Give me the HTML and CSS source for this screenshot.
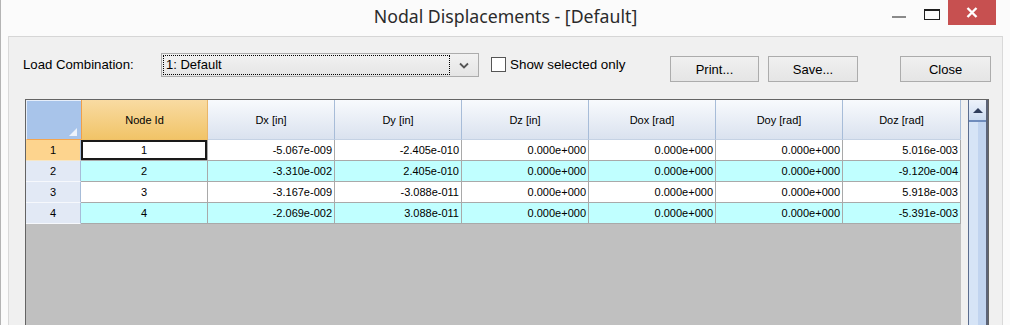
FILE: index.html
```html
<!DOCTYPE html>
<html>
<head>
  <title>Nodal Displacements - [Default]</title>
  <link rel="stylesheet" href="styles.css">
</head>
<body>
  <div class="window">
    <div class="titlebar">
      <div></div>
      <div class="title">Nodal Displacements - [Default]</div>
      <div class="controls">
        <span class="ctl ctl-min"><i></i></span>
        <span class="ctl ctl-max"><i></i></span>
        <span class="ctl ctl-close">
          <svg width="12" height="11" viewBox="0 0 12 11"><path d="M1.5 1 L10.5 10 M10.5 1 L1.5 10" stroke="#fff" stroke-width="2.4"/></svg>
        </span>
      </div>
    </div>

    <div class="client">
      <div class="toolbar">
        <label class="combo-label">Load Combination:</label>
        <div class="combo">
          <div class="combo-value">1: Default</div>
          <svg class="combo-arrow" width="10" height="7" viewBox="0 0 10 7"><path d="M1 1.5 L5 5.5 L9 1.5" fill="none" stroke="#555" stroke-width="1.8"/></svg>
        </div>
        <div class="check">
          <span class="check-box"></span>
          <span>Show selected only</span>
        </div>
        <button class="btn btn-print">Print...</button>
        <button class="btn btn-save">Save...</button>
        <button class="btn btn-close">Close</button>
      </div>

      <div class="grid-frame">
        <div class="grid-area">
          <div class="grid">
            <div class="hd corner"><span class="corner-tri"></span></div>
            <div class="hd hd-sel">Node Id</div>
            <div class="hd">Dx [in]</div>
            <div class="hd">Dy [in]</div>
            <div class="hd">Dz [in]</div>
            <div class="hd">Dox [rad]</div>
            <div class="hd">Doy [rad]</div>
            <div class="hd">Doz [rad]</div>

            <div class="rh rh-sel">1</div>
            <div class="c id current">1</div>
            <div class="c">-5.067e-009</div>
            <div class="c">-2.405e-010</div>
            <div class="c">0.000e+000</div>
            <div class="c">0.000e+000</div>
            <div class="c">0.000e+000</div>
            <div class="c">5.016e-003</div>

            <div class="rh">2</div>
            <div class="c id alt">2</div>
            <div class="c alt">-3.310e-002</div>
            <div class="c alt">2.405e-010</div>
            <div class="c alt">0.000e+000</div>
            <div class="c alt">0.000e+000</div>
            <div class="c alt">0.000e+000</div>
            <div class="c alt">-9.120e-004</div>

            <div class="rh">3</div>
            <div class="c id">3</div>
            <div class="c">-3.167e-009</div>
            <div class="c">-3.088e-011</div>
            <div class="c">0.000e+000</div>
            <div class="c">0.000e+000</div>
            <div class="c">0.000e+000</div>
            <div class="c">5.918e-003</div>

            <div class="rh">4</div>
            <div class="c id alt">4</div>
            <div class="c alt">-2.069e-002</div>
            <div class="c alt">3.088e-011</div>
            <div class="c alt">0.000e+000</div>
            <div class="c alt">0.000e+000</div>
            <div class="c alt">0.000e+000</div>
            <div class="c alt">-5.391e-003</div>
          </div>
        </div>
        <div class="vscroll">
          <div class="vs-up"><span class="vs-tri"></span></div>
          <div class="vs-thumb"></div>
        </div>
      </div>
    </div>
  </div>
</body>
</html>
```

FILE: styles.css
```css
:root {
  --frame-bg: #fbfbfb;
  --client-bg: #f0f0f0;
  --ctl-border: #acacac;
  --text: #000;
  --cell-line: #a9a9a9;
  --hd-line: #a7bcd8;
  --alt-row: #c0ffff;
}

html, body {
  margin: 0;
  padding: 0;
  width: 1010px;
  height: 325px;
  overflow: hidden;
  background: var(--frame-bg);
  font-family: "Liberation Sans", Arial, sans-serif;
  color: var(--text);
}

.window {
  height: 325px;
  border-left: 1px solid #b4b4b4;
  box-sizing: border-box;
}

/* title bar */
.titlebar {
  display: grid;
  grid-template-columns: 1fr auto 1fr;
  height: 36px;
}

.title {
  font-family: "Noto Sans", sans-serif;
  font-size: 17.7px;
  color: #2b2b2b;
  padding-top: 4px;
}

.controls {
  display: flex;
  justify-content: flex-end;
  align-items: flex-start;
  padding-right: 14px;
}

.ctl {
  width: 33px;
  height: 26px;
  display: flex;
  justify-content: center;
}

.ctl-min i {
  display: block;
  width: 14px;
  height: 2px;
  margin-top: 16px;
  background: #8a8a8a;
}

.ctl-max i {
  display: block;
  width: 14px;
  height: 8px;
  margin-top: 9px;
  border: 1px solid #1e1e1e;
  border-top-width: 2px;
}

.ctl-close {
  width: 48px;
  height: 25px;
  background: #c75050;
  align-items: center;
}

/* client */
.client {
  margin-left: 7px;
  margin-right: 7px;
  height: 289px;
  background: var(--client-bg);
  border-top: 1px solid #d6d6d6;
  border-left: 1px solid #d9d9d9;
  border-right: 1px solid #d9d9d9;
  box-sizing: border-box;
  overflow: hidden;
}

.toolbar {
  display: flex;
  align-items: flex-start;
  height: 62px;
  padding: 16px 0 0 14px;
  box-sizing: border-box;
  font-size: 13px;
}

.combo-label {
  width: 138px;
  line-height: 24px;
  font-size: 13.2px;
}

.combo {
  width: 318px;
  height: 24px;
  border: 1px solid var(--ctl-border);
  background: linear-gradient(#f2f2f2, #e5e5e5);
  box-sizing: border-box;
  display: flex;
  align-items: center;
  padding: 1px;
}

.combo-value {
  flex: 1;
  height: 100%;
  border: 1px dotted #000;
  box-sizing: border-box;
  line-height: 18px;
  padding-left: 2px;
}

.combo-arrow {
  margin: 0 8px 0 9px;
}

.check {
  display: flex;
  align-items: center;
  margin: 4px 0 0 12px;
  width: 179px;
  font-size: 13.4px;
}

.check-box {
  width: 15px;
  height: 15px;
  border: 1px solid #555;
  background: #fff;
  box-sizing: border-box;
  margin-right: 4px;
}

.btn {
  font-family: inherit;
  font-size: 13px;
  color: #000;
  height: 26px;
  width: 89px;
  margin-top: 3px;
  border: 1px solid var(--ctl-border);
  background: linear-gradient(#f0f0f0, #e5e5e5);
  padding: 0;
}

.btn-save {
  margin-left: 9px;
  width: 90px;
}

.btn-close {
  margin-left: 42px;
  width: 91px;
}

/* data grid */
.grid-frame {
  display: flex;
  margin-left: 16px;
  width: 964px;
  height: 240px;
  border: 1px solid #646464;
  border-bottom: none;
  box-sizing: border-box;
  font-size: 11px;
}

.grid-area {
  flex: 1;
  background: #c0c0c0;
}

.grid {
  display: grid;
  grid-template-columns: 55px repeat(6, 127px) 118px;
  grid-template-rows: 40px repeat(4, 21px);
}

.grid > div {
  box-sizing: border-box;
  display: flex;
  align-items: center;
  white-space: nowrap;
}

.hd {
  justify-content: center;
  background: linear-gradient(#f8fafd, #dae2ef);
  border-right: 1px solid var(--hd-line);
  border-bottom: 1px solid #c5d2e4;
}

.hd-sel {
  background: linear-gradient(#f9dba2, #f1c468);
  border-left: 1px solid #f0a04a;
  border-right-color: #e9b66a;
  border-bottom-color: #efbf66;
}

.corner {
  position: relative;
  background: #a8c4ea;
  border: 1px solid #e6eefa;
  border-right: none;
  border-bottom-color: #f4a54f;
}

.corner-tri {
  position: absolute;
  right: 4px;
  bottom: 3px;
  width: 0;
  height: 0;
  border-left: 8px solid transparent;
  border-bottom: 8px solid #eef3fb;
}

.rh {
  justify-content: center;
  background: #e2e9f5;
  border-right: 1px solid var(--hd-line);
  border-bottom: 1px solid #f6f8fc;
}

.rh-sel {
  background: #fdd48e;
  border-bottom-color: #f6e6c6;
}

.rh:last-of-type {
  border-bottom-color: var(--hd-line);
}

.c {
  justify-content: flex-end;
  padding-right: 2px;
  background: #fff;
  border-right: 1px solid var(--cell-line);
  border-bottom: 1px solid var(--cell-line);
}

.c.id {
  justify-content: center;
  padding-right: 0;
}

.c.alt {
  background: var(--alt-row);
}

.c.current {
  box-shadow: inset 0 0 0 2px #1a1a1a;
}

.vscroll {
  width: 21px;
  margin-left: 7px;
  border-left: 1px solid #5a6c8e;
  background: #5c6478;
  padding-right: 2px;
  display: flex;
  flex-direction: column;
}

.vs-up {
  height: 20px;
  background: linear-gradient(#eef3fb, #ccdcf2);
  display: flex;
  align-items: center;
  justify-content: center;
  border-bottom: 2px solid #6f8cbc;
}

.vs-tri {
  width: 0;
  height: 0;
  border-left: 5px solid transparent;
  border-right: 5px solid transparent;
  border-bottom: 5px solid #2f3d5c;
}

.vs-thumb {
  flex: 1;
  background: linear-gradient(90deg, #d6e4f6 50%, #c1d4ef 50%);
}
```
